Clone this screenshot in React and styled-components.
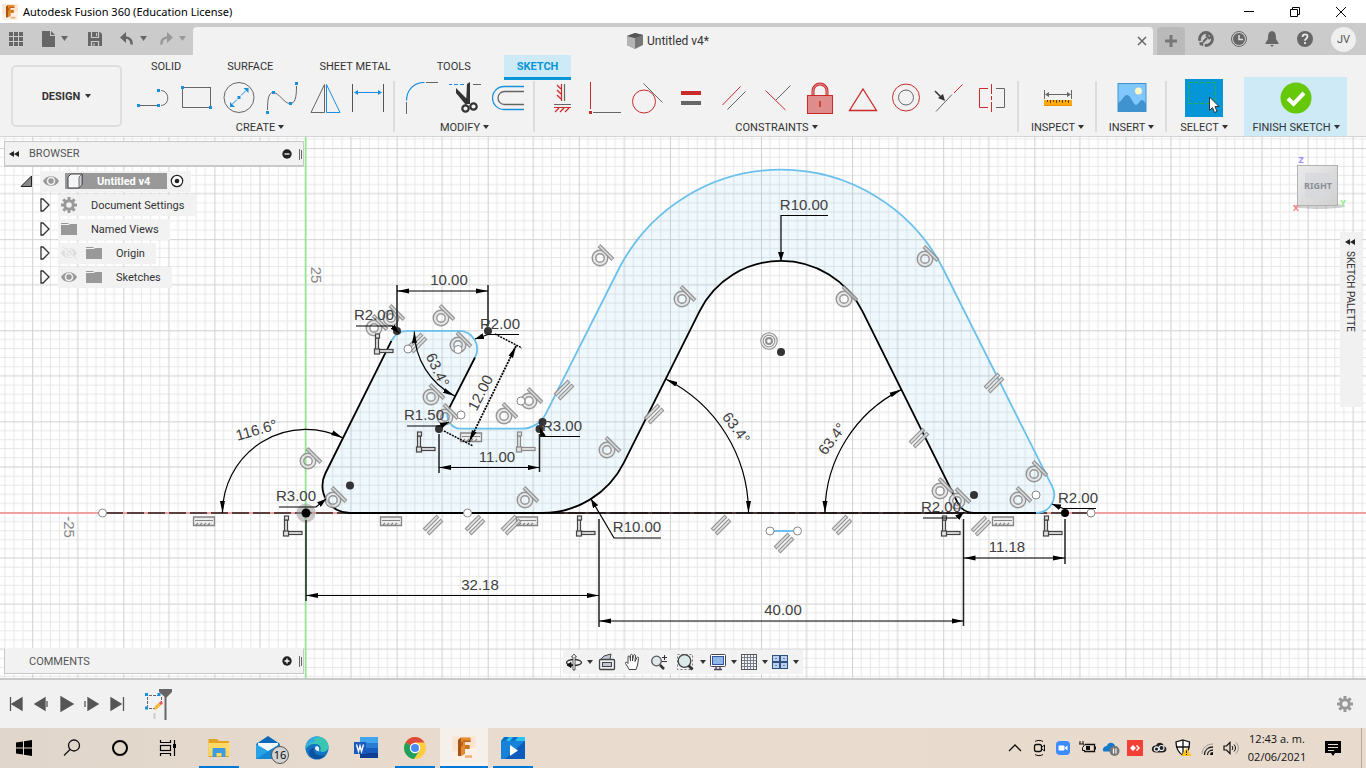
import React from "react";
import styled, { createGlobalStyle, css } from "styled-components";

const BLUE = "#1a8fe0";
const RED = "#c92a2a";
const GRAY = "#666";

const GlobalStyle = createGlobalStyle`
  *, *::before, *::after { box-sizing: border-box; }
  body { margin: 0; font-family: Roboto, "Liberation Sans", sans-serif; font-size: 11px; color: #333; background: #f1f1f1; }
  button { font: inherit; color: inherit; background: none; border: 0; padding: 0; cursor: default; }
  h1, h2, p, ul { margin: 0; padding: 0; font: inherit; list-style: none; }
  svg { display: block; }
`;

/* ---------- shared ---------- */
const App = styled.div`
  display: flex;
  flex-direction: column;
  min-height: 100vh;
`;

const Spacer = styled.div`
  flex: 1;
`;

const IconButton = styled.button`
  display: flex;
  align-items: center;
  justify-content: center;
  flex: none;
  width: ${(p) => p.$w || 24}px;
  height: ${(p) => p.$h || 24}px;
`;

const Caret = ({ color = "#333" }) => (
  <svg width="6" height="4" viewBox="0 0 6 4" aria-hidden="true">
    <path d="M0 0H6L3 4Z" fill={color} />
  </svg>
);

/* ---------- window title ---------- */
const TitleBar = styled.header`
  display: flex;
  align-items: center;
  height: 23px;
  padding: 0 2px;
  background: #fff;
`;

const TitleText = styled.h1`
  margin-left: 5px;
  font: 11px "Noto Sans", "Open Sans", sans-serif;
  color: #000;
`;

const FusionLogo = ({ size }) => (
  <svg width={size} height={size} viewBox="0 0 24 24" aria-hidden="true">
    <rect x="0.5" y="0.5" width="23" height="23" fill="#fbe3cf" />
    <path d="M0 16L24 11V24H0Z" fill="#fdf1e6" />
    <path d="M6 4L9 1.500H18.500V6H13V9H17.500V13H13V18L9 20H6Z" fill="#e58a2e" />
    <path d="M6 4L9 1.500V20H6Z" fill="#a85513" />
    <path d="M9 6H18.500V4.500H11V9L9 11Z" fill="#b9651b" />
    <path d="M13 9H17.500V13H13V11Z" fill="#c8741f" />
    <path d="M13 20.500H20" stroke="#ecae74" strokeWidth="2.500" />
  </svg>
);

/* ---------- application bar ---------- */
const TabStrip = styled.div`
  display: flex;
  align-items: flex-end;
  height: 32px;
  background: #cbcbcb;
`;

const QuickAccess = styled.div`
  display: flex;
  align-items: center;
  width: 193px;
  height: 32px;
  padding-left: 5px;
`;

const DocumentTab = styled.div`
  flex: 1;
  display: flex;
  align-items: center;
  height: 28px;
  padding-left: 12px;
  background: #f2f2f2;
  border-radius: 4px 4px 0 0;
  font-size: 12px;
  line-height: 16px;
`;

const DocumentName = styled.span`
  display: flex;
  flex: 1;
  align-items: center;
  justify-content: center;
  gap: 4px;
`;

const NewTab = styled(IconButton)`
  margin: 0 4px;
  background: #bababa;
  border-radius: 4px 4px 0 0;
`;

const AccountArea = styled.div`
  display: flex;
  align-items: center;
  height: 32px;
  padding-right: 10px;
`;

const Avatar = styled.button`
  width: 25px;
  height: 25px;
  margin-left: 10px;
  border-radius: 50%;
  background: #efefef;
  color: #555;
`;

/* ---------- ribbon ---------- */
const Ribbon = styled.div`
  display: flex;
  height: 82px;
  background: #f2f2f2;
  border-bottom: 1px solid #d4d4d4;
`;

const Workspace = styled.button`
  display: flex;
  align-items: center;
  justify-content: center;
  gap: 5px;
  flex: none;
  width: 111px;
  height: 62px;
  margin: 10px 4px 0 11px;
  border: 2px solid #dedede;
  border-radius: 5px;
  font-weight: 700;
`;

const RibbonMain = styled.div`
  flex: 1;
  min-width: 0;
`;

const RibbonTabs = styled.nav`
  display: flex;
  gap: 20px;
  height: 24px;
  padding-left: 12px;
`;

const RibbonTab = styled.button`
  height: ${(p) => (p.$active ? 25 : 22)}px;
  padding: 0 13px;
  ${(p) =>
    p.$active &&
    css`
      background: #cdeaf6;
      border-bottom: 3px solid #0696d7;
      color: #0696d7;
      font-weight: 700;
    `}
`;

const RibbonGroups = styled.div`
  display: flex;
  height: 57px;
`;

const Group = styled.section`
  display: flex;
  flex-direction: column;
  align-items: center;
  flex: none;
  width: ${(p) => (p.$w ? `${p.$w}px` : "auto")};
  padding: 0 4px 0 5px;
  ${(p) =>
    p.$divided &&
    css`
      background: linear-gradient(#dcdcdc, #dcdcdc) right 0 top 2px / 2px 51px no-repeat;
      padding-right: 6px;
    `}
  ${(p) =>
    p.$finish &&
    css`
      background: #cdeaf6;
      margin: -2px 0 0 4px;
      padding-top: 2px;
    `}
`;

const ToolRow = styled.div`
  display: flex;
  height: 38px;
`;

const GroupLabel = styled.button`
  display: flex;
  align-items: center;
  gap: 3px;
  height: 19px;
  padding-top: 1px;
  white-space: nowrap;
`;

const Sq = ({ x, y }) => <rect x={x - 1.5} y={y - 1.5} width="3" height="3" fill={BLUE} />;

const Art = ({ children, w = 32, h = 32 }) => (
  <svg width={w} height={h} viewBox={`0 0 ${w} ${h}`} fill="none" aria-hidden="true">
    {children}
  </svg>
);

const createTools = [
  ["Line", <Art><path d="M3 23.500H20M24 8.500C33 9 33 23 24 23.500" stroke={GRAY} /><Sq x={1.5} y={23.5} /><Sq x={21.5} y={23.5} /><Sq x={21.5} y={8.5} /></Art>],
  ["Rectangle", <Art><rect x="2.500" y="5.500" width="28" height="20" stroke={GRAY} /><Sq x={2.5} y={5.5} /><Sq x={30.5} y={25.5} /></Art>],
  ["Circle", <Art><circle cx="16" cy="15.500" r="15" stroke={GRAY} /><path d="M9 22.500L14 17.500M18 13.500L23 8.500" stroke={BLUE} /><path d="M7 25V20L12 25ZM25.500 6H20.500L25.500 11Z" fill={BLUE} /><Sq x={16} y={15.5} /></Art>],
  ["Spline", <Art><path d="M1.500 28C1.500 16 3 10.500 7 10.500C13 10.500 18 21.500 24 21.500C29 21.500 30.500 16 30.500 4" stroke={GRAY} /><Sq x={1.5} y={30.5} /><Sq x={7.5} y={10.5} /><Sq x={24.5} y={21.5} /><Sq x={30.5} y={1.5} /></Art>],
  ["Mirror", <Art><path d="M15.500 2.500V30.500H2Z" stroke={GRAY} /><path d="M17.500 2.500V30.500H31Z" stroke={BLUE} /></Art>],
  ["Sketch Dimension", <Art><path d="M.5 2V30M31.500 2V30" stroke="#555" /><path d="M4 10.500H28" stroke={BLUE} /><path d="M2 10.500L6 8V13ZM30 10.500L26 8V13Z" fill={BLUE} /></Art>],
];

const modifyTools = [
  ["Fillet", <Art><path d="M.5 18.500C.5 8 8 .5 18.500 .5" stroke={BLUE} strokeWidth="1.200" /><path d="M20 .5H32M.5 20V32" stroke={GRAY} /></Art>],
  ["Trim", <Art><path d="M-1 2.500H16" stroke={BLUE} strokeDasharray="4 2" /><path d="M24 2.500H32" stroke={GRAY} /><path d="M7 6L20 19L17 23L7 11ZM18 2L21 0V22H17Z" fill="#333" /><circle cx="16.500" cy="26.500" r="3.200" stroke="#333" strokeWidth="2.200" /><circle cx="24.500" cy="24.500" r="3.200" stroke="#333" strokeWidth="2.200" /></Art>],
  ["Offset", <Art><path d="M32 4.500H12A11.500 11.500 0 0 0 12 27.500H32" stroke={BLUE} strokeWidth="1.300" /><path d="M32 9.500H12.500A6.500 6.500 0 0 0 12.500 22.500H32" stroke={GRAY} strokeWidth="1.300" /></Art>],
];

const constraintTools = [
  ["Horizontal/Vertical", <Art><path d="M15.500 2V19M15 7L11 3M15 12L11 8M15 17L11 13M8 25.500H25M13 26L9 30M18 26L14 30M23 26L19 30" stroke={RED} strokeWidth="1.200" /><path d="M18.500 2V19M8 22.500H25" stroke={GRAY} strokeWidth="1.200" /></Art>],
  ["Coincident", <Art><path d="M1.500 0V27" stroke={RED} /><rect x="0" y="29" width="3" height="3" fill={RED} /><path d="M4 30.500H32" stroke={GRAY} /></Art>],
  ["Tangent", <Art><circle cx="12" cy="19.500" r="11.500" stroke={RED} /><path d="M11.500 1.500L30.500 20.500" stroke={GRAY} /></Art>],
  ["Equal", <Art><path d="M6 11H26" stroke={RED} strokeWidth="4" /><path d="M6 21H26" stroke={GRAY} strokeWidth="4" /></Art>],
  ["Parallel", <Art><path d="M4.500 23L22.500 4.500" stroke={RED} /><path d="M9.500 27.500L27.500 9.500" stroke={GRAY} /></Art>],
  ["Perpendicular", <Art><path d="M4.500 8.500L24.500 28" stroke={RED} /><path d="M15 18L29.500 3.500" stroke={GRAY} /></Art>],
  ["Fix/Unfix", <Art><path d="M9 14V9A7 7 0 0 1 23 9V14" stroke={RED} strokeWidth="3" /><path d="M9 14V9A7 7 0 0 1 23 9V14" stroke="#e59a9a" /><rect x="3.500" y="13.500" width="25" height="18" fill="#df8c8c" stroke={RED} /><path d="M16 19V25" stroke={RED} strokeWidth="1.500" /></Art>],
  ["Midpoint", <Art><path d="M16 7L29.500 28.500H2.500Z" stroke={RED} strokeWidth="1.300" /></Art>],
  ["Concentric", <Art><circle cx="16" cy="15.500" r="13.500" stroke={RED} /><circle cx="16" cy="15.500" r="7.500" stroke={GRAY} /></Art>],
  ["Collinear", <Art><path d="M3 29.500L19 12.500" stroke={GRAY} /><path d="M21 11L29.500 2.500" stroke={RED} /><path d="M2 9L9 16" stroke="#333" strokeWidth="1.500" /><path d="M12 19L5 16L10 12Z" fill="#333" /></Art>],
  ["Symmetry", <Art><path d="M12 6.500H3.500V25.500H12" stroke={RED} /><path d="M15.500 2V12M15.500 14V18M15.500 20V30" stroke={RED} /><path d="M20 6.500H28.500V25.500H20" stroke={GRAY} /></Art>],
];

const inspectTools = [
  ["Measure", <Art><path d="M2.500 8V17M29.500 8V17M5 12.500H27" stroke={GRAY} /><path d="M3 12.500L7 10V15ZM29 12.500L25 10V15Z" fill={GRAY} /><rect x="2" y="18" width="28" height="6" fill="#ffa90a" /><path d="M2 23.500H30" stroke="#e89200" /><path d="M5.500 18V20M8.500 18V21M11.500 18V20M14.500 18V21M17.500 18V20M20.500 18V21M23.500 18V20M26.500 18V21" stroke="#5d4300" /></Art>],
];

const insertTools = [
  ["Insert image", <Art><rect x="2" y="1.500" width="28" height="28" fill="#80c6ff" stroke="#3f93cf" /><circle cx="22.500" cy="9" r="3.500" fill="#fff7c4" /><path d="M2 21C6 19 8 13 11 13C15 13 17 23 20 23C22 23 24 18 26 18C28 18 29 21 30 22V30H2Z" fill="#3f93cf" /></Art>],
];

const selectTools = [
  ["Select", <Art w={38} h={38}><rect width="38" height="38" fill="#0696d7" /><rect x="3.500" y="3.500" width="27" height="21" stroke="#24b24b" strokeDasharray="4 2" /><path d="M24.500 18V31.500L27.500 28.500L29.500 33.500L32 32.500L30 27.500H34Z" fill="#fff" stroke="#333" /></Art>],
];

const finishTools = [
  ["Finish Sketch", <Art><circle cx="16" cy="16" r="15.500" fill="#65c808" /><path d="M8 16.500L13.500 22L24 11" stroke="#fff" strokeWidth="4" /></Art>],
];

function RibbonGroup({ label, tools, ...rest }) {
  return (
    <Group {...rest}>
      <ToolRow>
        {tools.map(([name, art]) => (
          <IconButton key={name} aria-label={name} $w={43} $h={38}>
            {art}
          </IconButton>
        ))}
      </ToolRow>
      <GroupLabel>
        {label}
        <Caret />
      </GroupLabel>
    </Group>
  );
}

/* ---------- canvas ---------- */
const Canvas = styled.main`
  position: relative;
  display: flex;
  justify-content: space-between;
  flex: 1;
  min-height: 541px;
  overflow: hidden;
  background: #fff;
`;

const Sketch = styled.svg`
  position: absolute;
  inset: 0;
  width: 100%;
  height: 100%;
  font: 15px "Liberation Sans", Arial, sans-serif;
`;

const Side = styled.aside`
  position: relative;
  display: flex;
  flex-direction: column;
  justify-content: space-between;
  width: 300px;
  margin: 4px 0 4px 4px;
`;

const PanelHead = styled.div`
  display: flex;
  align-items: center;
  height: 26px;
  padding-left: 4px;
  background: #f2f2f2;
  border: 1px solid #c8c8c8;
  border-top-color: ${(p) => (p.$open ? "#f2f2f2" : "#c8c8c8")};
  border-bottom-width: ${(p) => (p.$open ? 1 : 2)}px;
  color: #555;
`;

const PanelTitle = styled.h2`
  flex: 1;
  padding-left: ${(p) => (p.$indent ? 20 : 10)}px;
`;

const Tree = styled.ul`
  padding: 2px 0 0 15px;
`;

const TreeRow = styled.li`
  display: flex;
  align-items: center;
  height: 24px;
  padding-left: ${(p) => (p.$root ? 0 : 13)}px;
`;

const TreeItem = styled.div`
  display: flex;
  align-items: center;
  height: 21px;
  padding: 0 ${(p) => (p.$root ? 7 : 11)}px 0 2px;
  background: #f2f2f2;
`;

const RootName = styled.span`
  display: flex;
  align-items: center;
  gap: 13px;
  width: 102px;
  height: 16px;
  padding-left: 1px;
  margin-right: 3px;
  background: #999;
  color: #fff;
  font-weight: 700;
`;

const ItemText = styled.span`
  margin-left: 13px;
`;

const NavBar = styled.div`
  position: absolute;
  left: 0;
  right: 0;
  bottom: 4px;
  display: flex;
  justify-content: center;
  pointer-events: none;
`;

const NavTools = styled.div`
  display: flex;
  align-items: center;
  height: 24px;
  padding-right: 3px;
  background: #f2f2f2;
  pointer-events: auto;
`;

const Palette = styled.button`
  position: relative;
  display: flex;
  align-items: center;
  gap: 5px;
  align-self: flex-start;
  width: 22px;
  height: 175px;
  margin: 95px 4px 0 0;
  padding: 6px 2px 0 0;
  background: #f1f1f1;
  font-size: 10px;
  writing-mode: vertical-rl;
`;

const Rewind = () => (
  <svg width="10" height="6" viewBox="0 0 10 6" aria-hidden="true">
    <path d="M5 0V6L0 3ZM10 0V6L5 3Z" fill="#222" />
  </svg>
);

const Twisty = () => (
  <svg width="10" height="14" viewBox="0 0 10 14" aria-hidden="true">
    <path d="M1 1V13H3L9 7L3 1Z" fill="#fff" stroke="#333" strokeWidth="1.300" />
  </svg>
);

const Eye = ({ off }) => (
  <svg width="18" height="16" viewBox="0 0 18 16" fill="none" aria-hidden="true">
    <path d="M1 8C4 1.500 14 1.500 17 8C14 14.500 4 14.500 1 8Z" fill={off ? "#ddd" : "#999"} />
    <circle cx="9" cy="8" r="3.500" fill={off ? "#ddd" : "#999"} stroke="#f2f2f2" strokeWidth="1.500" />
    {off && <path d="M2 2L16 14" stroke="#f2f2f2" strokeWidth="2.500" />}
    {off && <path d="M3 2L17 14" stroke="#ddd" />}
  </svg>
);

const Gear = () => (
  <svg width="18" height="18" viewBox="0 0 18 18" fill="none" stroke="#999" aria-hidden="true">
    <circle cx="9" cy="9" r="4.300" strokeWidth="3" />
    <path d="M9 1V4M9 14V17M1 9H4M14 9H17M3.300 3.300L5.500 5.500M12.500 12.500L14.700 14.700M14.700 3.300L12.500 5.500M5.500 12.500L3.300 14.700" strokeWidth="3" />
  </svg>
);

const Folder = () => (
  <svg width="18" height="14" viewBox="0 0 18 14" aria-hidden="true">
    <path d="M1 1H8L9 2H1ZM1 3H9L10 2H17V13H1Z" fill="#999" />
  </svg>
);

/* sketch geometry helpers; coordinates are in window pixels */
const Tangent = ({ x, y }) => (
  <g transform={`translate(${x} ${y})`} fill="none" opacity="0.850">
    <circle r="6" stroke="#858585" strokeWidth="5" />
    <circle r="6" stroke="#e4e4e4" strokeWidth="2.200" />
    <path d="M-1 -12.500L13 1.500" stroke="#858585" strokeWidth="4" />
    <path d="M-.5 -12L12.500 1" stroke="#d8d8d8" strokeWidth="1.500" />
  </g>
);

const Parallel = ({ x, y }) => (
  <g transform={`translate(${x} ${y})`} fill="none" opacity="0.900">
    <path d="M-9 5L5 -9M-5 9L9 -5" stroke="#8a8a8a" strokeWidth="4" />
    <path d="M-8.300 4.300L4.300 -8.300M-4.300 8.300L8.300 -4.300" stroke="#dcdcdc" strokeWidth="1.800" />
  </g>
);

const Comb = ({ x, y }) => (
  <g transform={`translate(${x} ${y})`} fill="none">
    <path d="M-10.500 -4H10.500V4.500H-10.500Z" fill="#ececec" stroke="#858585" strokeWidth="1.300" />
    <path d="M-9 -.500H9M-8 4L-6 2M-4 4L-2 2M0 4L2 2M4 4L6 2" stroke="#858585" strokeWidth="1.200" />
  </g>
);

const Perp = ({ x, y, light }) => (
  <g transform={`translate(${x} ${y})`} fill="#e0e0e0" stroke={light ? "#8a8a8a" : "#444"} strokeWidth="1.200">
    <rect x="-1.500" y="-13" width="3" height="12" />
    <rect x="2" y="-1.500" width="14" height="3" />
    <rect x="-2.500" y="-2" width="5" height="5" />
    <rect x="-1.500" y="-17" width="4" height="4" />
  </g>
);

const tangents = [[600, 258], [925, 259], [682, 299], [844, 299], [441, 318], [391, 318], [374, 328], [458, 345], [431, 397], [445, 417], [504, 416], [529, 401], [308, 461], [333, 500], [525, 500], [607, 450], [1034, 474], [1018, 500], [940, 491], [957, 501]];
const parallels = [[564, 390], [654, 414], [417, 343], [433, 525], [475, 525], [511, 525], [721, 525], [842, 525], [784, 543], [994, 383], [919, 438], [981, 526]];
const combs = [[204, 521], [391, 521], [527, 521], [471, 437], [1003, 521]];
const perps = [[377, 351], [419, 449], [519, 449, true], [286, 533], [579, 533], [944, 533], [1046, 533]];
const solidPoints = [[397, 331], [488, 331], [439, 429], [539.5, 429], [542.5, 422], [350, 485.5], [781, 352], [974, 495]];
const openPoints = [[408, 349], [458, 349.5], [461, 415], [521, 401], [467.5, 513], [1091, 513], [102.5, 513], [1036, 495], [770, 531], [797.5, 531]];

const extensions = "M397 285V328M488 285V326M439 434V473M539.500 434V472M306 520V601M599 519V627M963.500 519V626M1065 519V564";
const dimensionLines = ["M397 291H488", "M439 467.500H539.500", "M306 595.500H599", "M599 621H963.500", "M963.500 558H1065", "M222.500 513A83.500 83.500 0 0 1 343 438", "M414.300 331.500A73.500 73.500 0 0 0 454.700 396", "M748.500 513A149.800 149.800 0 0 0 665.700 379", "M825 513A138 138 0 0 1 901.300 389.600"];
const leaders = ["M356 326H392L399 333", "M519 334.500H488L475 339", "M407 426H440L449 422", "M580 436.500H543L540 428", "M279 507H316L326 499", "M661 538H614L591 499", "M828 215.500H781V261", "M923 518H957L964 512", "M1096 508.500H1063L1052 504"];
const labels = [
  ["10.00", 449, 285], ["11.00", 497, 462], ["32.18", 480, 590], ["40.00", 783, 615], ["11.18", 1007, 552],
  ["R2.00", 374, 320], ["R2.00", 500, 329], ["R1.50", 424, 420], ["R3.00", 562, 431], ["R3.00", 296, 501],
  ["R10.00", 637, 532], ["R10.00", 804, 210], ["R2.00", 941, 512], ["R2.00", 1078, 503],
  ["12.00", 485, 395, -63], ["116.6°", 258, 435, -16], ["63.4°", 433, 372, 65], ["63.4°", 732, 431, 53], ["63.4°", 836, 442, -53],
];

const outline = "M349.700 513A27.300 27.300 0 0 1 325.300 473.500L391.400 340.900A18.200 18.200 0 0 1 407.700 330.800H458.800A18.200 18.200 0 0 1 475 357.500L448.800 408.900A13.700 13.700 0 0 0 461 428.700H521.500A27.300 27.300 0 0 0 545.900 413.600L618 270.500A182.200 182.200 0 0 1 944 270.500L1052.300 486.700A18.200 18.200 0 0 1 1036 513H974A18.200 18.200 0 0 1 957.700 502.900L862.500 311.300A91.100 91.100 0 0 0 699.500 311.300L623.900 462.600A91.100 91.100 0 0 1 542.400 513Z";
const freeEdges = "M391.400 340.900A18.200 18.200 0 0 1 407.700 330.800H458.800A18.200 18.200 0 0 1 475 357.500M448.800 408.900A13.700 13.700 0 0 0 461 428.700H521.500A27.300 27.300 0 0 0 545.900 413.600L618 270.500A182.200 182.200 0 0 1 944 270.500L1052.300 486.700A18.200 18.200 0 0 1 1036 513M774 531H793";
const fixedEdges = "M391.400 340.900L325.300 473.500A27.300 27.300 0 0 0 349.700 513H542.400A91.100 91.100 0 0 0 623.900 462.600L699.500 311.300A91.100 91.100 0 0 1 862.500 311.300L957.700 502.900A18.200 18.200 0 0 0 974 513H1036M475 357.500L448.800 408.900";

function SketchDrawing() {
  const u = 9.11;
  const minor = [1, 2, 3, 4, 6, 7, 8, 9].map((n) => `M${n * u} 0V${u * 10}M0 ${n * u}H${u * 10}`).join("");
  return (
    <Sketch role="img" aria-label="Dimensioned sketch profile">
      <defs>
        <pattern id="grid" patternUnits="userSpaceOnUse" x="305.500" y="512.500" width={u * 10} height={u * 10}>
          <path d={minor} stroke="#e7e7e7" />
          <path d={`M${u * 5} 0V${u * 10}M0 ${u * 5}H${u * 10}`} stroke="#d0d0d0" />
          <path d={`M.5 0V${u * 10}M0 .5H${u * 10}`} stroke="#d0d0d0" />
        </pattern>
        <marker id="arrow" orient="auto-start-reverse" markerUnits="userSpaceOnUse" markerWidth="12" markerHeight="6" refX="12" refY="3">
          <path d="M12 3L0 .5V5.500Z" fill="#000" />
        </marker>
        <marker id="tip" orient="auto" markerUnits="userSpaceOnUse" markerWidth="9" markerHeight="6" refX="9" refY="3">
          <path d="M9 3L0 0V6Z" fill="#000" />
        </marker>
        <linearGradient id="cube" x1="0" y1="0" x2="1" y2="1">
          <stop offset="0" stopColor="#ebebeb" />
          <stop offset="1" stopColor="#cfcfcf" />
        </linearGradient>
      </defs>
      <g transform="translate(0 -137)">
        <rect x="0" y="137" width="100%" height="100%" fill="url(#grid)" />
        <path d={outline} fill="#6fc0ee" fillOpacity="0.110" />
        <line x1="0" x2="100%" y1="513" y2="513" stroke="#f08b8b" strokeWidth="1.500" />
        <line x1="305.500" x2="305.500" y1="137" y2="2000" stroke="#8be88b" strokeWidth="1.500" />
        <path d="M106 513H1088" stroke="#2a2020" strokeWidth="1.300" strokeDasharray="17 4" />
        <path d="M349 513H1036" stroke="#111" strokeWidth="1.300" />
        <g fill="none" strokeWidth="1.800">
          <path d={freeEdges} stroke="#6bc1ec" />
          <path d={fixedEdges} stroke="#000" />
        </g>
        {combs.map(([x, y]) => <Comb key={`${x}-${y}`} x={x} y={y} />)}
        {parallels.map(([x, y]) => <Parallel key={`${x}-${y}`} x={x} y={y} />)}
        {tangents.map(([x, y]) => <Tangent key={`${x}-${y}`} x={x} y={y} />)}
        {perps.map(([x, y, light]) => <Perp key={`${x}-${y}`} x={x} y={y} light={light} />)}
        <g fill="none" stroke="#8f8f8f">
          <circle cx="769" cy="341" r="7" strokeWidth="3.500" />
          <circle cx="769" cy="341" r="7" strokeWidth="1.500" stroke="#e8e8e8" />
          <circle cx="769" cy="341" r="3" strokeWidth="2" />
        </g>
        <circle cx="306" cy="513" r="9.500" fill="#999" fillOpacity="0.550" />
        <g fill="#333">{solidPoints.map(([x, y]) => <circle key={`${x}-${y}`} cx={x} cy={y} r="4" />)}</g>
        <g fill="#000">
          <circle cx="306" cy="513" r="4.500" />
          <circle cx="1065" cy="513" r="4" />
        </g>
        <g fill="#fff" stroke="#888">{openPoints.map(([x, y]) => <circle key={`${x}-${y}`} cx={x} cy={y} r="4" />)}</g>
        <g fill="none" stroke="#000" strokeWidth="1.200">
          <path d={extensions} stroke="#222" strokeWidth="1.500" />
          {dimensionLines.map((d) => <path key={d} d={d} markerStart="url(#arrow)" markerEnd="url(#arrow)" />)}
          {leaders.map((d) => <path key={d} d={d} markerEnd="url(#tip)" />)}
          <path d="M495 334L522 348M444 431L473 446" strokeWidth="1.500" strokeDasharray="2 1" />
          <path d="M516 346L469 442" strokeWidth="1.800" strokeDasharray="2 1" markerStart="url(#arrow)" markerEnd="url(#arrow)" />
        </g>
        <g fill="#404040" textAnchor="middle">
          {labels.map(([t, x, y, a]) => (
            <text key={`${x}-${y}`} x={x} y={y} transform={a ? `rotate(${a} ${x} ${y})` : undefined}>{t}</text>
          ))}
        </g>
        <g fill="#888" textAnchor="middle">
          <text transform="translate(311 275) rotate(90)">25</text>
          <text transform="translate(64 527) rotate(90)">-25</text>
        </g>
      </g>
    </Sketch>
  );
}

const CubeWrap = styled.div`
  position: absolute;
  top: 15px;
  right: 16px;
`;

const ViewCube = () => (
  <CubeWrap>
    <svg width="60" height="62" viewBox="0 0 60 62" role="img" aria-label="View cube">
      <ellipse cx="29" cy="54" rx="26" ry="3" fill="#000" opacity="0.180" />
      <rect x="7.500" y="13.500" width="40" height="40" fill="url(#cube)" stroke="#b2b2b2" />
      <rect x="15" y="21" width="25" height="25" fill="#d6d8dc" opacity="0.800" />
      <g fontFamily="Noto Sans, sans-serif" fontWeight="700" fontSize="9" textAnchor="middle">
        <text x="28" y="37" fill="#8b8f96">RIGHT</text>
        <text x="11" y="11" fill="#8f8ffb">Z</text>
        <text x="6" y="59" fill="#fb7f7f">X</text>
        <text x="53" y="54" fill="#8bf08b">Y</text>
      </g>
    </svg>
  </CubeWrap>
);

const navTools = [
  ["Orbit", 22, true, <Art w={18} h={18}><ellipse cx="9" cy="9.500" rx="7.500" ry="3" stroke="#333" strokeWidth="1.300" /><path d="M8 4H6.500L9 1L11.500 4H10V17H8Z" fill="#fff" stroke="#333" strokeWidth=".8" /><path d="M2 12L6 9.500V14.500ZM5 12H8" fill="#111" stroke="#111" /></Art>],
  ["Look At", 26, false, <Art w={18} h={18}><path d="M3 6L6 3L13 1L12 6" fill="#bfc6d4" stroke="#444" /><rect x="1.500" y="6.500" width="15" height="10" rx="1" fill="#eef0f4" stroke="#444" strokeWidth="1.300" /><rect x="4.500" y="9.500" width="9" height="4" fill="#c2c7d3" stroke="#444" /></Art>],
  ["Pan", 26, false, <Art w={18} h={18}><path d="M5 16L1.500 10.500C1 9 2.500 8.500 4 10.500V4C4 2.500 6 2.500 6 4L6.500 8V2.500C6.500 1 8.500 1 8.500 2.500V8L9.500 2.500C10 1 11.500 1.500 11.500 3L11 8.500L13 4.500C13.500 3.500 15 4 14.500 5.500L13.500 12L12 16.500H5Z" fill="#fff" stroke="#444" /></Art>],
  ["Zoom", 26, false, <Art w={18} h={18}><circle cx="6.500" cy="8" r="4.800" fill="#dfe9ea" stroke="#555" strokeWidth="1.300" /><path d="M10 12L14 16" stroke="#333" strokeWidth="2.500" /><path d="M12 4.500H17M14.500 2V7M12 8.500H17" stroke="#333" /></Art>],
  ["Fit", 26, true, <Art w={18} h={18}><rect x="1.500" y="1.500" width="15" height="15" stroke="#777" strokeDasharray="2 2" /><circle cx="8.500" cy="8" r="6.300" fill="#dce9e9" stroke="#444" strokeWidth="1.300" /><path d="M12.500 12.500L16.500 16.500" stroke="#333" strokeWidth="2.800" /></Art>],
  ["Display Settings", 22, true, <Art w={18} h={18}><rect x="1.500" y="1.500" width="15" height="12" rx="1" fill="#fff" stroke="#445" /><rect x="3.500" y="3.500" width="11" height="8" fill="#8fb8ea" stroke="#31589a" /><path d="M7 14V16M11 14V16M5 16.500H13" stroke="#445" strokeWidth="1.300" /></Art>],
  ["Grid and Snaps", 22, true, <Art w={18} h={18}><rect x="1.500" y="1.500" width="15" height="15" fill="#f4f5f8" stroke="#555" /><path d="M4.500 2V16M7.500 2V16M10.500 2V16M13.500 2V16M2 4.500H16M2 7.500H16M2 10.500H16M2 13.500H16" stroke="#777d88" /></Art>],
  ["Viewports", 22, true, <Art w={18} h={18}><rect x="1.500" y="2.500" width="7" height="6" fill="#bcd0ee" stroke="#31517f" /><rect x="9.500" y="2.500" width="7" height="6" fill="#bcd0ee" stroke="#31517f" /><rect x="1.500" y="9.500" width="7" height="6" fill="#bcd0ee" stroke="#31517f" /><rect x="9.500" y="9.500" width="7" height="6" fill="#bcd0ee" stroke="#31517f" /><path d="M4 5.500H6M12 5.500H14M4 12.500H6M12 12.500H14" stroke="#5f83b8" /></Art>],
];

/* ---------- timeline ---------- */
const Timeline = styled.div`
  display: flex;
  align-items: center;
  height: 50px;
  padding: 0 9px 0 4px;
  background: #f1f1f1;
  border-top: 2px solid #c9c9c9;
`;

const playback = [
  ["Go to start", "M2.500 2V16M14 3V15L4 9Z"],
  ["Step back", "M12 3V15L2 9ZM14 6V12"],
  ["Play", "M3 2V16L15 9Z"],
  ["Step forward", "M2 6V12M5 3V15L15 9Z"],
  ["Go to end", "M3 3V15L13 9ZM15.500 2V16"],
];

const Feature = styled.button`
  margin-left: 12px;
`;

/* ---------- taskbar ---------- */
const Taskbar = styled.footer`
  display: flex;
  height: 40px;
  background: linear-gradient(90deg, #e0d6cb, #e9dbce 35%, #e8dacd);
`;

const TaskGroup = styled.div`
  display: flex;
  gap: ${(p) => p.$gap || 0}px;
  margin-left: ${(p) => (p.$gap ? 3 : 0)}px;
`;

const TaskButton = styled(IconButton)`
  position: relative;
  background: ${(p) => (p.$active ? "#f6f0ea" : "none")};
  &::after {
    content: "";
    position: absolute;
    bottom: 0;
    left: ${(p) => (p.$active ? 0 : 4)}px;
    right: ${(p) => (p.$active ? 0 : 4)}px;
    height: 2px;
    background: ${(p) => (p.$open ? "#0078d7" : "none")};
  }
`;

const Badge = styled.span`
  position: absolute;
  left: 27px;
  top: 18px;
  width: 18px;
  height: 18px;
  border: 1px solid #555;
  border-radius: 50%;
  background: #d3d3d3;
  color: #000;
  font: 11px/16px "Open Sans", sans-serif;
  text-align: center;
`;

const Clock = styled.button`
  width: 66px;
  padding-left: 2px;
  font: 11px/18px "Open Sans", "Noto Sans", sans-serif;
  color: #111;
  text-align: center;
`;

const ShowDesktop = styled.button`
  width: 5px;
  margin-left: 4px;
  border-left: 1px solid #b5a89b;
`;

const systemTasks = [
  ["Start", <Art w={16} h={16}><path d="M0 2.500L7 1.500V7.500H0ZM8 1.300L16 0V7.500H8ZM0 8.500H7V14.500L0 13.500ZM8 8.500H16V16L8 14.800Z" fill="#000" /></Art>],
  ["Search", <Art w={18} h={18}><circle cx="11" cy="6.500" r="5.500" stroke="#111" strokeWidth="1.300" /><path d="M7 10.500L1 16.500" stroke="#111" strokeWidth="1.300" /></Art>],
  ["Cortana", <Art w={18} h={18}><circle cx="9" cy="9" r="7" stroke="#000" strokeWidth="2" /></Art>],
  ["Task View", <Art w={18} h={18}><path d="M1.500 1V3.500H11.500V1M1.500 17V14.500H11.500V17M15.500 1V17" stroke="#000" strokeWidth="1.200" /><rect x="1.500" y="6.500" width="10" height="5" stroke="#000" strokeWidth="1.200" /><rect x="14" y="5" width="3" height="4" fill="#000" /></Art>],
];

const appTasks = [
  ["File Explorer", { $open: true }, <Art w={24} h={24}><path d="M1.500 3H10L12 5H22V21H1.500Z" fill="#e3a51f" /><path d="M1.500 7H22.500V20H1.500Z" fill="#ffd867" /><path d="M5.500 21V14C5.500 12.500 6 12 7 12H17C18 12 18.500 12.500 18.500 14V21H14.500V17H9.500V21Z" fill="#3d9be0" /></Art>],
  ["Mail", {}, <Art w={24} h={24}><path d="M0 8L12 0L24 8V22H0Z" fill="#1068b8" /><path d="M2 7H22V16H2Z" fill="#f4f8fb" /><path d="M0 8L12 15L24 8V23H0Z" fill="#29a3e4" /><path d="M0 23L24 8V23Z" fill="#1788d6" /></Art>],
  ["Microsoft Edge", {}, <Art w={24} h={24}><circle cx="12" cy="12" r="11.500" fill="#1474c4" /><path d="M.7 10C2 3 8 .3 13 .5C20 1 24 6.500 23.500 11.500C23 15.500 17.500 17 15 15C17 12 15 8 10.500 8C6 8 2 9 .7 14Z" fill="#38c5b4" /><path d="M.6 11C2 3 9 -1 15 1C9 1.500 8 4 11 6C5 6 2 8 .6 13Z" fill="#36a9e1" /><path d="M9 12C8 17 12 21 20 19C17 23.500 9 24.500 5 20C3 16 5 12 9 12Z" fill="#0c529c" /><path d="M10 12C10 10 13 9.500 14 11.500C14.500 13 13.500 14 14.500 15.500C11.500 15 10 14 10 12Z" fill="#e8f4fb" /></Art>],
  ["Word", {}, <Art w={24} h={24}><rect x="6" y="1" width="18" height="6" fill="#41a5ee" /><rect x="6" y="7" width="18" height="5" fill="#2b7cd3" /><rect x="6" y="12" width="18" height="5" fill="#185abd" /><rect x="6" y="17" width="18" height="5" fill="#103f91" /><rect x="0" y="6" width="12" height="12" fill="#185abd" /><path d="M2.500 8.500L4.500 15.500L6 10L7.500 15.500L9.500 8.500" stroke="#fff" strokeWidth="1.400" /></Art>],
  ["Chrome", { $open: true }, <Art w={24} h={24}><circle cx="12" cy="12" r="11" fill="#ffcd40" /><path d="M12 12L2.500 6.500A11 11 0 0 1 21.500 6.500H12Z" fill="#dd4b3e" /><path d="M2.500 6.500A11 11 0 0 0 11 23L16.500 14.500L12 12Z" fill="#1fa05c" /><circle cx="12" cy="12" r="5.200" fill="#fff" /><circle cx="12" cy="12" r="4" fill="#4c8bf5" /></Art>],
  ["Autodesk Fusion 360", { $open: true, $active: true }, <FusionLogo size={24} />],
  ["Movies & TV", { $open: true }, <Art w={24} h={24}><path d="M0 5L4 1H24V5Z" fill="#27c3f3" /><path d="M3 1H8L5 5H0ZM12 1H17L14 5H9Z" fill="#1270c4" /><rect x="0" y="5" width="24" height="18" fill="#1683d8" /><path d="M24 5V23H4Z" fill="#0b5cbd" /><path d="M9 9V20L17 14.500Z" fill="#fff" /></Art>],
];

const trayItems = [
  ["Show hidden icons", <Art w={18} h={18}><path d="M3 12L9 6L15 12" stroke="#111" strokeWidth="1.300" /></Art>],
  ["Meet Now", <Art w={18} h={18}><rect x="4.500" y="5.500" width="7" height="7" rx="2" stroke="#111" strokeWidth="1.300" /><path d="M12 8L14.500 6V12L12 10M5 2.500C7 1 11 1 13 2.500M5 15.500C7 17 11 17 13 15.500" stroke="#111" /></Art>],
  ["Zoom", <Art w={18} h={18}><rect x="2" y="2" width="14" height="14" rx="4" fill="#3b8cff" /><rect x="4.500" y="6.500" width="6" height="5" rx="1" fill="#fff" /><path d="M11 8.500L13.500 6.500V11.500L11 9.500Z" fill="#fff" /></Art>],
  ["Battery", <Art w={18} h={18}><path d="M7 5.500H16.500V12.500H6M17.500 7.500V10.500" stroke="#111" strokeWidth="1.300" /><rect x="8" y="7" width="4" height="4" fill="#111" /><path d="M2 2V5M5 2V5M1 5H6V7L4.500 8.500V11.500H7" stroke="#111" /></Art>],
  ["OneDrive", <Art w={18} h={18}><path d="M1 12C0 8 4 7 5 7C6 2.500 12 3 13 7C17 7 17 12 14 12.500H2Z" fill="#1479cc" /><circle cx="12.500" cy="12" r="5" fill="#777" /><path d="M11.500 9.500V14.500M14 9.500V14.500" stroke="#fff" strokeWidth="1.200" /></Art>],
  ["AnyDesk", <Art w={18} h={18}><rect x="1" y="1" width="16" height="16" fill="#f23f38" /><path d="M4 9L7 6L10 9L7 12ZM11 6L14 9L11 12L10 11L12 9L10 7Z" fill="#fff" /></Art>],
  ["Creative Cloud", <Art w={18} h={18}><path d="M6 13.500C0 13.500 1 6 6 6.500C8 2 14 4 13.500 7C18 8 17 13.500 12.500 13.500Z" fill="#222" /><circle cx="6.500" cy="10" r="2.200" stroke="#eee" strokeWidth="1.200" /><circle cx="11.500" cy="9" r="2.500" stroke="#eee" strokeWidth="1.200" /></Art>],
  ["Windows Security", <Art w={18} h={18}><path d="M9 1L15.500 3C15.500 9 14.500 13 9 16.500C3.500 13 2 9 2 3Z" fill="#fff" stroke="#111" strokeWidth="1.300" /><path d="M9 1V16M2 8H15" stroke="#111" strokeWidth="1.300" /><path d="M12.500 8.500L17.500 17H7.500Z" fill="#ffc21a" /><path d="M12.500 11.500V14M12.500 15V16" stroke="#222" /></Art>],
  ["Network", <Art w={18} h={18}><path d="M4 15C4 9 9 5 15 5" stroke="#999" /><path d="M6.500 16C6.500 11 10 8 15 8M9.500 16C9.500 13 12 11 15 11" stroke="#222" strokeWidth="1.300" /><path d="M15 13V16H12C12 14 13 13 15 13Z" fill="#111" /></Art>],
  ["Volume", <Art w={18} h={18}><path d="M2 7H4.500L8 3.500V14.500L4.500 11H2Z" stroke="#111" strokeWidth="1.200" /><path d="M10 7C11 8 11 10 10 11M12 5.500C14 7.500 14 10.500 12 12.500" stroke="#111" /><path d="M14 3.500C17 6.500 17 11.500 14 14.500" stroke="#999" /></Art>],
];

const treeRows = [
  ["Document Settings", <Gear />, false],
  ["Named Views", <Folder />, false],
  ["Origin", <Folder />, "off"],
  ["Sketches", <Folder />, "on"],
];

const EyeSlot = styled.span`
  margin-right: ${(p) => (p.$root ? 5 : 7)}px;
`;

export default function FusionWindow() {
  return (
    <App>
      <GlobalStyle />
      <TitleBar>
        <FusionLogo size={16} />
        <TitleText>Autodesk Fusion 360 (Education License)</TitleText>
        <Spacer />
        <IconButton aria-label="Minimize" $w={46} $h={22}><Art w={12} h={12}><path d="M1 5.500H11" stroke="#000" /></Art></IconButton>
        <IconButton aria-label="Restore" $w={46} $h={22}><Art w={12} h={12}><path d="M1.500 3.500H8.500V10.500H1.500ZM3.500 3V1.500H10.500V8.500H9" stroke="#000" /></Art></IconButton>
        <IconButton aria-label="Close" $w={46} $h={22}><Art w={12} h={12}><path d="M1 1L11 11M11 1L1 11" stroke="#000" /></Art></IconButton>
      </TitleBar>

      <TabStrip>
        <QuickAccess>
          <IconButton aria-label="Data panel" $w={22}><Art w={14} h={14}><path d="M0 0H4V4H0ZM5 0H9V4H5ZM10 0H14V4H10ZM0 5H4V9H0ZM5 5H9V9H5ZM10 5H14V9H10ZM0 10H4V14H0ZM5 10H9V14H5ZM10 10H14V14H10Z" fill="#666" /></Art></IconButton>
          <IconButton aria-label="File" $w={56}><Art w={28} h={16}><path d="M1 0H9V5H14V16H1ZM10 0L14 4H10Z" fill="#666" /><path d="M20 5H27L23.500 10Z" fill="#666" /></Art></IconButton>
          <IconButton aria-label="Save" $w={24}><Art w={14} h={14}><path d="M0 0H12L14 2V14H0Z" fill="#666" /><path d="M3.500 0V5.500H10.500V0M3.500 14V9.500H10.500V14" stroke="#cbcbcb" strokeWidth="1.200" /><path d="M8.500 1V4M6 11V14" stroke="#cbcbcb" /></Art></IconButton>
          <IconButton aria-label="Undo" $w={52}><Art w={28} h={16}><path d="M1 6.500L7 1V12Z" fill="#666" /><path d="M5 6.500C10 6 13 9 12.500 13.500" stroke="#666" strokeWidth="2.500" /><path d="M21 5H28L24.500 10Z" fill="#666" /></Art></IconButton>
          <IconButton aria-label="Redo" $w={28}><Art w={28} h={16}><path d="M14 6.500L8 1V12Z" fill="#999" /><path d="M10 6.500C5 6 2 9 2.500 13.500" stroke="#999" strokeWidth="2.500" /><path d="M20 5H27L23.500 10Z" fill="#999" /></Art></IconButton>
        </QuickAccess>
        <DocumentTab>
          <DocumentName>
            <Art w={16} h={16}><path d="M0 3L8 0L16 2V12L8 16L0 12Z" fill="#777" /><path d="M0 3L8 5V16L0 12Z" fill="#b4b4b4" /><path d="M0 3L8 0L16 2L8 5Z" fill="#555" /></Art>
            Untitled v4*
          </DocumentName>
          <IconButton aria-label="Close document" $w={22}><Art w={10} h={10}><path d="M1 1L9 9M9 1L1 9" stroke="#666" strokeWidth="1.500" /></Art></IconButton>
        </DocumentTab>
        <NewTab aria-label="New design" $w={28} $h={28}><Art w={14} h={14}><path d="M7 1V13M1 7H13" stroke="#777" strokeWidth="3" /></Art></NewTab>
        <AccountArea>
          <IconButton aria-label="Extensions" $w={33}><Art w={16} h={16}><circle cx="8" cy="8" r="6.500" stroke="#666" strokeWidth="2.800" /><path d="M2 14L9 7M8 4L12 8M11 2L8.500 5M14 5L11 7.500" stroke="#666" strokeWidth="2.300" /><path d="M0 11L5 10M6 16V12" stroke="#cbcbcb" strokeWidth="1.500" /></Art></IconButton>
          <IconButton aria-label="Job status" $w={33}><Art w={16} h={16}><circle cx="8" cy="8" r="7.500" stroke="#666" /><circle cx="8" cy="8" r="6" fill="#666" /><path d="M8 4V8.500H12" stroke="#ddd" strokeWidth="1.500" /></Art></IconButton>
          <IconButton aria-label="Notifications" $w={33}><Art w={16} h={16}><path d="M8 0C12 1 12 4 12 8L14.500 12V13H1.500V12L4 8C4 4 4 1 8 0ZM6 14H10L8 16Z" fill="#666" /></Art></IconButton>
          <IconButton aria-label="Help" $w={33}><Art w={16} h={16}><circle cx="8" cy="8" r="8" fill="#666" /><path d="M5.500 6C5.500 2.500 10.500 2.500 10.500 5.500C10.500 7.500 8 7.500 8 9.800M8 11V13" stroke="#e8e8e8" strokeWidth="1.800" /></Art></IconButton>
          <Avatar aria-label="Account JV">JV</Avatar>
        </AccountArea>
      </TabStrip>

      <Ribbon>
        <Workspace>DESIGN <Caret /></Workspace>
        <RibbonMain>
          <RibbonTabs>
            {["SOLID", "SURFACE", "SHEET METAL", "TOOLS", "SKETCH"].map((t) => (
              <RibbonTab key={t} $active={t === "SKETCH"}>{t}</RibbonTab>
            ))}
          </RibbonTabs>
          <RibbonGroups>
            <RibbonGroup label="CREATE" tools={createTools} $divided />
            <RibbonGroup label="MODIFY" tools={modifyTools} $divided />
            <RibbonGroup label="CONSTRAINTS" tools={constraintTools} $divided />
            <RibbonGroup label="INSPECT" tools={inspectTools} $divided $w={78} />
            <RibbonGroup label="INSERT" tools={insertTools} $divided $w={70} />
            <RibbonGroup label="SELECT" tools={selectTools} $w={73} />
            <RibbonGroup label="FINISH SKETCH" tools={finishTools} $finish $w={103} />
          </RibbonGroups>
        </RibbonMain>
      </Ribbon>

      <Canvas>
        <SketchDrawing />
        <ViewCube />
        <Side>
          <div>
            <PanelHead>
              <Rewind />
              <PanelTitle>BROWSER</PanelTitle>
              <IconButton aria-label="Collapse browser" $w={16} $h={18}><Art w={10} h={10}><circle cx="5" cy="5" r="4.700" fill="#222" /><path d="M2.500 5H7.500" stroke="#fff" strokeWidth="1.300" /></Art></IconButton>
              <Art w={8} h={12}><path d="M4.500 1V12M6.500 2V11" stroke="#666" /></Art>
            </PanelHead>
            <Tree>
              <TreeRow $root>
                <Art w={21} h={14}><path d="M2 12.500L12.500 2V12.500Z" fill="#888" stroke="#222" /></Art>
                <TreeItem $root>
                  <EyeSlot $root><Eye /></EyeSlot>
                  <RootName>
                    <Art w={18} h={16}><path d="M2 4L5 1H16V12L13 15H2Z" fill="#f4f5f7" stroke="#444" /><path d="M13 4L16 1V12L13 15Z" fill="#c9ccd2" stroke="#444" strokeWidth=".7" /></Art>
                    Untitled v4
                  </RootName>
                  <Art w={14} h={14}><circle cx="7" cy="7" r="5.700" fill="#fff" stroke="#222" strokeWidth="1.200" /><circle cx="7" cy="7" r="2.300" fill="#222" /></Art>
                </TreeItem>
              </TreeRow>
              {treeRows.map(([name, icon, eye]) => (
                <TreeRow key={name}>
                  <IconButton aria-label={`Expand ${name}`} $w={26} $h={20}><Twisty /></IconButton>
                  <TreeItem>
                    {eye && <EyeSlot><Eye off={eye === "off"} /></EyeSlot>}
                    {icon}
                    <ItemText>{name}</ItemText>
                  </TreeItem>
                </TreeRow>
              ))}
            </Tree>
          </div>
          <PanelHead $open>
            <PanelTitle $indent>COMMENTS</PanelTitle>
            <IconButton aria-label="Expand comments" $w={16} $h={18}><Art w={10} h={10}><circle cx="5" cy="5" r="4.700" fill="#222" /><path d="M2.500 5H7.500M5 2.500V7.500" stroke="#fff" strokeWidth="1.300" /></Art></IconButton>
            <Art w={8} h={12}><path d="M4.500 1V12M6.500 2V11" stroke="#666" /></Art>
          </PanelHead>
        </Side>
        <NavBar>
          <NavTools>
            {navTools.map(([name, w, menu, art]) => (
              <React.Fragment key={name}>
                <IconButton aria-label={name} $w={w}>{art}</IconButton>
                {menu && <IconButton aria-label={`${name} options`} $w={9}><Caret /></IconButton>}
              </React.Fragment>
            ))}
          </NavTools>
        </NavBar>
        <Palette><svg width="10" height="8" viewBox="0 0 10 8" aria-hidden="true"><path d="M5 1V7L0 4ZM10 1V7L5 4Z" fill="#222" /></svg>SKETCH PALETTE</Palette>
      </Canvas>

      <Timeline>
        {playback.map(([name, d]) => (
          <IconButton key={name} aria-label={name} $w={25}>
            <Art w={18} h={18}><path d={d} fill="#555" stroke="#555" strokeWidth="1.300" /></Art>
          </IconButton>
        ))}
        <Feature aria-label="Sketch1">
          <Art w={32} h={32}><path d="M6.500 9V19M8 7.500H18M8 20.500H14M20.500 9V14" stroke="#666" strokeDasharray="3 1" /><Sq x={5.500} y={6.500} /><Sq x={18} y={6.500} /><Sq x={5.500} y={20} /><path d="M13 22L14 18L19 14L21 16L16 21Z" fill="#f7b63c" /><path d="M18 15L20 13L22 15L20 17Z" fill="#ef4f5b" /><path d="M13.500 25V31" stroke="#ccc" strokeWidth="2" /><path d="M18 1H31V4L25 10L18 4Z" fill="#666" /><path d="M24.500 5V32" stroke="#666" strokeWidth="2" /></Art>
        </Feature>
        <Spacer />
        <IconButton aria-label="Timeline settings"><Gear /></IconButton>
      </Timeline>

      <Taskbar>
        <TaskGroup>
          {systemTasks.map(([name, art]) => (
            <TaskButton key={name} aria-label={name} $w={48} $h={40}>{art}</TaskButton>
          ))}
        </TaskGroup>
        <TaskGroup $gap={1}>
          {appTasks.map(([name, state, art]) => (
            <TaskButton key={name} aria-label={name} $w={48} $h={40} {...state}>
              {art}
              {name === "Mail" && <Badge>16</Badge>}
            </TaskButton>
          ))}
        </TaskGroup>
        <Spacer />
        {trayItems.map(([name, art]) => (
          <IconButton key={name} aria-label={name} $w={24} $h={40}>{art}</IconButton>
        ))}
        <Clock>12:43 a. m.<br />02/06/2021</Clock>
        <IconButton aria-label="Action center" $w={48} $h={40}><Art w={18} h={18}><path d="M1 2H17V14H11L9 17L7 14H1Z" fill="#000" /><path d="M4 5.500H14M4 8.500H14M4 11.500H10" stroke="#e8dacd" /></Art></IconButton>
        <ShowDesktop aria-label="Show desktop" />
      </Taskbar>
    </App>
  );
}
